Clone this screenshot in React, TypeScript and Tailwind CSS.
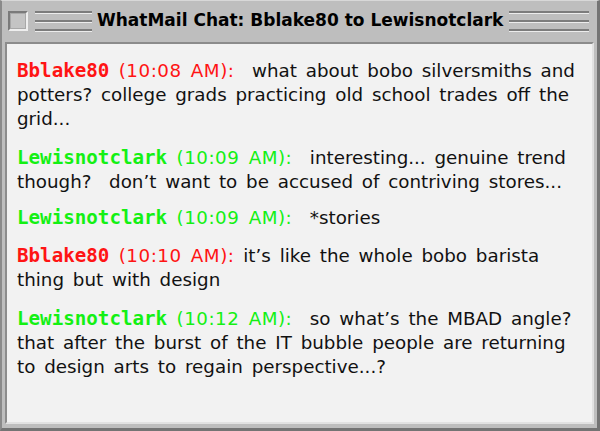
const messages = [
  {
    id: 1,
    name: "Bblake80",
    time: "(10:08 AM):",
    color: "text-[#ff1414]",
    text: "what about bobo silversmiths and potters? college grads practicing old school trades off the grid...",
    gap: true,
    mt: "",
  },
  {
    id: 2,
    name: "Lewisnotclark",
    time: "(10:09 AM):",
    color: "text-[#14f014]",
    text: "interesting... genuine trend though?\u00a0 don\u2019t want to be accused of contriving stores...",
    gap: true,
    mt: "mt-[15px]",
  },
  {
    id: 3,
    name: "Lewisnotclark",
    time: "(10:09 AM):",
    color: "text-[#14f014]",
    text: "*stories",
    gap: true,
    mt: "mt-[12px]",
  },
  {
    id: 4,
    name: "Bblake80",
    time: "(10:10 AM):",
    color: "text-[#ff1414]",
    text: "it\u2019s like the whole bobo barista thing but with design",
    gap: false,
    mt: "mt-[14px]",
  },
  {
    id: 5,
    name: "Lewisnotclark",
    time: "(10:12 AM):",
    color: "text-[#14f014]",
    text: "so what\u2019s the MBAD angle? that after the burst of the IT bubble people are returning to design arts to regain perspective...?",
    gap: true,
    mt: "mt-[15px]",
  },
];

function TitleLines({ className }: { className: string }) {
  return (
    <div className={`flex flex-col gap-[6px] ${className}`}>
      {[0, 1, 2].map((i) => (
        <div key={i} className="flex flex-col">
          <div className="h-[2px] bg-[#7c7c7c]" />
          <div className="h-px bg-[#ececec]" />
        </div>
      ))}
    </div>
  );
}

export default function App() {
  return (
    <div className="w-[600px] h-[431px] bg-white">
      <div className="w-full h-full flex flex-col bg-[#bebebe] border-t border-t-[#d8d8d8] border-l-2 border-l-[#8a8a8a] border-r-[3px] border-r-[#747474] border-b-[3px] border-b-[#747474]">
        {/* Title bar */}
        <div className="h-[40px] flex items-center flex-shrink-0">
          <div className="ml-[6px] w-[20px] h-[20px] border-2 border-t-[#7a7a7a] border-l-[#7a7a7a] border-r-[#eeeeee] border-b-[#eeeeee] bg-[#c4c4c4]">
            <div className="w-full h-full border border-[#a8a8a8]" />
          </div>
          <TitleLines className="ml-[7px] w-[57px]" />
          <h1 className="ml-[5px] text-[17px] font-bold text-black whitespace-nowrap font-['DejaVu_Sans',sans-serif]">
            WhatMail Chat: Bblake80 to Lewisnotclark
          </h1>
          <TitleLines className="ml-[6px] w-[80px]" />
        </div>

        {/* Chat content */}
        <div className="flex-1 mx-[3px] mb-[4px] mt-[1px] bg-[#f2f2f2] border-t-2 border-l-2 border-t-[#8c8c8c] border-l-[#8c8c8c] border-r-2 border-b-2 border-r-[#e2e2e2] border-b-[#e2e2e2]">
          <div className="pl-[10px] pr-[14px] pt-[15px] flex flex-col text-[18.3px] leading-[24px] text-[#111] font-['DejaVu_Sans',sans-serif] [word-spacing:3px]">
            {messages.map((m) => (
              <p key={m.id} className={m.mt}>
                <span className={`font-bold font-['DejaVu_Sans_Mono',monospace] text-[19.2px] [word-spacing:0] ${m.color}`}>
                  {m.name}
                </span>
                <span className={`tracking-[0.5px] ${m.color}`}> {m.time}</span>
                {m.gap ? "\u00a0 " : " "}
                {m.text}
              </p>
            ))}
          </div>
        </div>
      </div>
    </div>
  );
}
